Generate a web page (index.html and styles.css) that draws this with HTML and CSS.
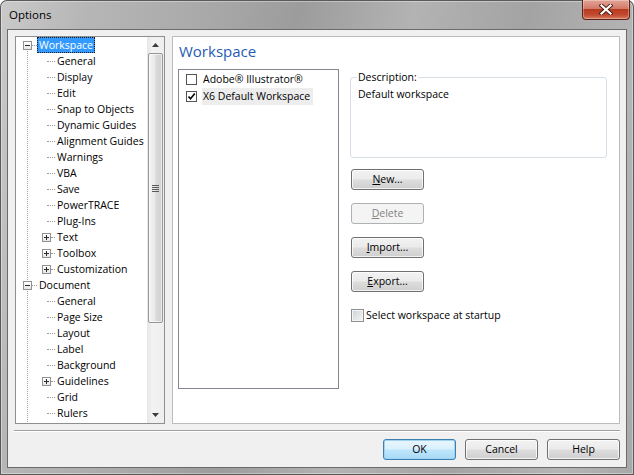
FILE: index.html
```html
<!DOCTYPE html>
<html>
<head>
<meta charset="utf-8">
<title>Options</title>
<link rel="stylesheet" href="styles.css">
</head>
<body>
<div class="window">
  <div class="titlebar">
    <span class="title">Options</span>
    <div class="close">
      <svg width="14" height="11" viewBox="0 0 14 11"><path d="M2.5 1.5 L11.5 9.5 M11.5 1.5 L2.5 9.5" stroke="#4a1a12" stroke-width="4" stroke-linecap="square"/><path d="M2.5 1.5 L11.5 9.5 M11.5 1.5 L2.5 9.5" stroke="#ffffff" stroke-width="2.2" stroke-linecap="square"/></svg>
    </div>
  </div>
  <div class="client">
    <div class="main">
      <div class="treebox">
        <div class="tree">
          <div class="row l0"><span class="exp"><svg width="9" height="9" viewBox="0 0 9 9"><path d="M2 4.5 H7" stroke="#2a2a2a"/></svg></span><span class="hz"></span><span class="label sel">Workspace</span></div>
          <div class="row l1"><span class="hz"></span><span class="label">General</span></div>
          <div class="row l1"><span class="hz"></span><span class="label">Display</span></div>
          <div class="row l1"><span class="hz"></span><span class="label">Edit</span></div>
          <div class="row l1"><span class="hz"></span><span class="label">Snap to Objects</span></div>
          <div class="row l1"><span class="hz"></span><span class="label">Dynamic Guides</span></div>
          <div class="row l1"><span class="hz"></span><span class="label">Alignment Guides</span></div>
          <div class="row l1"><span class="hz"></span><span class="label">Warnings</span></div>
          <div class="row l1"><span class="hz"></span><span class="label">VBA</span></div>
          <div class="row l1"><span class="hz"></span><span class="label">Save</span></div>
          <div class="row l1"><span class="hz"></span><span class="label">PowerTRACE</span></div>
          <div class="row l1"><span class="hz"></span><span class="label">Plug-Ins</span></div>
          <div class="row l1x"><span class="exp"><svg width="9" height="9" viewBox="0 0 9 9"><path d="M2 4.5 H7 M4.5 2 V7" stroke="#2a2a2a"/></svg></span><span class="hz"></span><span class="label">Text</span></div>
          <div class="row l1x"><span class="exp"><svg width="9" height="9" viewBox="0 0 9 9"><path d="M2 4.5 H7 M4.5 2 V7" stroke="#2a2a2a"/></svg></span><span class="hz"></span><span class="label">Toolbox</span></div>
          <div class="row l1x"><span class="exp"><svg width="9" height="9" viewBox="0 0 9 9"><path d="M2 4.5 H7 M4.5 2 V7" stroke="#2a2a2a"/></svg></span><span class="hz"></span><span class="label">Customization</span></div>
          <div class="row l0"><span class="exp"><svg width="9" height="9" viewBox="0 0 9 9"><path d="M2 4.5 H7" stroke="#2a2a2a"/></svg></span><span class="hz"></span><span class="label">Document</span></div>
          <div class="row l1"><span class="hz"></span><span class="label">General</span></div>
          <div class="row l1"><span class="hz"></span><span class="label">Page Size</span></div>
          <div class="row l1"><span class="hz"></span><span class="label">Layout</span></div>
          <div class="row l1"><span class="hz"></span><span class="label">Label</span></div>
          <div class="row l1"><span class="hz"></span><span class="label">Background</span></div>
          <div class="row l1x"><span class="exp"><svg width="9" height="9" viewBox="0 0 9 9"><path d="M2 4.5 H7 M4.5 2 V7" stroke="#2a2a2a"/></svg></span><span class="hz"></span><span class="label">Guidelines</span></div>
          <div class="row l1"><span class="hz"></span><span class="label">Grid</span></div>
          <div class="row l1"><span class="hz"></span><span class="label">Rulers</span></div>
        </div>
        <div class="vscroll">
          <div class="sb-btn"><svg width="7" height="4" viewBox="0 0 7 4"><polygon points="0,4 3.5,0 7,4" fill="#3c3c3c"/></svg></div>
          <div class="track">
            <div class="thumb">
              <svg width="7" height="7" viewBox="0 0 7 7"><path d="M0 0.5 H7 M0 2.5 H7 M0 4.5 H7 M0 6.5 H7" stroke="#5a5a5a"/></svg>
            </div>
          </div>
          <div class="sb-btn"><svg width="7" height="4" viewBox="0 0 7 4"><polygon points="0,0 7,0 3.5,4" fill="#3c3c3c"/></svg></div>
        </div>
      </div>
      <div class="page">
        <h1>Workspace</h1>
        <div class="content">
          <div class="list">
            <div class="item"><span class="cb"></span><span class="txt">Adobe® Illustrator®</span></div>
            <div class="item"><span class="cb"><svg width="9" height="9" viewBox="0 0 9 9"><path d="M1.5 4.5 L3.5 6.8 L7.8 1.6" stroke="#000" stroke-width="1.6" fill="none"/></svg></span><span class="txt selected">X6 Default Workspace</span></div>
          </div>
          <div class="side">
            <fieldset class="desc">
              <legend>Description:</legend>
              <div class="desc-text">Default workspace</div>
            </fieldset>
            <div class="btns">
              <div class="btn"><u>N</u>ew...</div>
              <div class="btn disabled"><u>D</u>elete</div>
              <div class="btn"><u>I</u>mport...</div>
              <div class="btn"><u>E</u>xport...</div>
            </div>
            <div class="check"><span class="box"></span><span>Select workspace at startup</span></div>
          </div>
        </div>
      </div>
    </div>
    <div class="sep"></div>
    <div class="footer">
      <div class="btn default">OK</div>
      <div class="btn">Cancel</div>
      <div class="btn">Help</div>
    </div>
  </div>
</div>
</body>
</html>
```
FILE: styles.css
```css
* { box-sizing: border-box; }
html, body { margin: 0; padding: 0; }
body {
  width: 634px;
  height: 475px;
  overflow: hidden;
  background: #ffffff;
  font-family: "Open Sans", "Noto Sans", sans-serif;
  font-size: 10.5px;
  color: #000;
}
.window {
  width: 634px;
  height: 475px;
  display: flex;
  flex-direction: column;
  padding: 0 7px 7px 7px;
  border-radius: 7px 7px 0 0;
  background: linear-gradient(100deg, #cacaca 0%, #b6b6b6 12%, #aaaaaa 28%, #9c9c9c 42%, #b3b3b3 58%, #a3a3a3 74%, #b5b5b5 90%, #a8a8a8 100%);
  box-shadow: inset 0 0 0 1px #5a5a5a, inset 0 0 0 2px rgba(255,255,255,0.35);
}
.titlebar {
  height: 29px;
  flex: none;
  display: flex;
  justify-content: space-between;
  align-items: flex-start;
}
.title {
  margin: 7px 0 0 2px;
  font-size: 11.5px;
  line-height: 16px;
  color: #000;
}
.close {
  width: 48px;
  height: 20px;
  margin-right: -3px;
  border: 1px solid #5e2218;
  border-top: none;
  border-radius: 0 0 4px 4px;
  background: linear-gradient(#e3a597 0%, #d27a68 45%, #b73a20 50%, #c24a30 78%, #d67c5e 100%);
  box-shadow: inset 0 0 0 1px rgba(255,255,255,0.3);
  display: flex;
  align-items: center;
  justify-content: center;
}
.client {
  flex: 1;
  background: #f0f0f0;
  border: 1px solid #6b6b6b;
  padding: 6px 6px 7px 7px;
  display: flex;
  flex-direction: column;
}
.main {
  height: 388px;
  display: flex;
  gap: 7px;
  flex: none;
}
.treebox {
  width: 150px;
  border: 1px solid #8e8f8f;
  background: #fff;
  display: flex;
  overflow: hidden;
}
.tree {
  flex: 1;
  overflow: hidden;
  background-image: repeating-linear-gradient(to bottom, #a0a0a0 0, #a0a0a0 1px, transparent 1px, transparent 2px);
  background-size: 1px 400px;
  background-position: 11px 14px;
  background-repeat: no-repeat;
}
.row {
  height: 16px;
  display: flex;
  align-items: center;
  white-space: nowrap;
}
.l0 { padding-left: 7px; }
.l1 { padding-left: 31px; }
.l1x { padding-left: 26px; }
.exp {
  width: 9px;
  height: 9px;
  flex: none;
  border: 1px solid #919191;
  background: linear-gradient(#ffffff, #e6e6e6);
  display: flex;
  position: relative;
}
.exp svg { position: absolute; left: -1px; top: -1px; }
.hz {
  flex: none;
  height: 0;
  border-top: 1px dotted #9a9a9a;
}
.l0 .hz { width: 5px; }
.l1 .hz { width: 8px; }
.l1x .hz { width: 4px; }
.label {
  padding: 0 2px;
  height: 16px;
  line-height: 16px;
}
.label.sel {
  background: #3399ff;
  color: #fff;
  outline: 1px dotted #1a1a1a;
  outline-offset: -1px;
}
.vscroll {
  width: 17px;
  flex: none;
  display: flex;
  flex-direction: column;
  background: linear-gradient(90deg, #e6e6e6 0%, #f2f2f2 30%, #efefef 100%);
}
.sb-btn {
  height: 16px;
  flex: none;
  display: flex;
  align-items: center;
  justify-content: center;
}
.track {
  flex: 1;
  padding: 0 1px 0 1px;
}
.thumb {
  height: 270px;
  border: 1px solid #979797;
  border-radius: 2px;
  background: linear-gradient(90deg, #f4f4f4 0%, #e8e8e8 45%, #d9d9d9 55%, #d0d0d0 100%);
  box-shadow: inset 0 0 0 1px rgba(255,255,255,0.6);
  display: flex;
  align-items: center;
  justify-content: center;
}
.page {
  flex: 1;
  border: 1px solid #bcbcbc;
  background: #fff;
  padding: 4px 0 0 5px;
}
h1 {
  margin: 0;
  padding-left: 1px;
  font-size: 15px;
  font-weight: normal;
  line-height: 20px;
  color: #1f5bb5;
}
.content {
  margin-top: 8px;
  display: flex;
}
.list {
  width: 161px;
  height: 320px;
  border: 1px solid #828790;
  padding-top: 1px;
}
.item {
  height: 17px;
  display: flex;
  align-items: center;
}
.cb {
  width: 11px;
  height: 11px;
  flex: none;
  margin: 0 5px 0 7px;
  border: 1px solid #555;
  background: #fff;
  display: flex;
  align-items: center;
  justify-content: center;
}
.txt {
  padding: 0 3px 0 1px;
  line-height: 17px;
  height: 17px;
  white-space: nowrap;
}
.txt.selected { background: #ededed; }
.side {
  width: 257px;
  margin-left: 11px;
  display: flex;
  flex-direction: column;
  align-items: flex-start;
}
.desc {
  width: 257px;
  height: 88px;
  margin: 1px 0 0 0;
  padding: 0 6px;
  border: 1px solid #d5dfe5;
  border-radius: 3px;
}
.desc legend {
  padding: 0 1px;
  line-height: 14px;
}
.desc-text {
  margin-top: 3px;
  padding-left: 1px;
  line-height: 14px;
}
.btns {
  margin: 11px 0 0 1px;
  display: flex;
  flex-direction: column;
  gap: 13px;
}
.btn {
  width: 73px;
  height: 21px;
  border: 1px solid #707070;
  border-radius: 3px;
  background: linear-gradient(#f2f2f2 0%, #ebebeb 48%, #dddddd 52%, #cfcfcf 100%);
  box-shadow: inset 0 0 0 1px rgba(255,255,255,0.75);
  text-align: center;
  line-height: 19px;
  color: #000;
}
.btn.disabled {
  border-color: #adb2b5;
  background: #f4f4f4;
  box-shadow: none;
  color: #838383;
}
.btn.default {
  border-color: #3c7fb1;
  background: linear-gradient(#eaf6fd 0%, #d9f0fc 48%, #bee6fd 52%, #a7d9f5 100%);
  box-shadow: inset 0 0 0 1px #9fd3f2;
}
.check {
  margin: 16px 0 0 1px;
  display: flex;
  align-items: center;
  gap: 2px;
  line-height: 14px;
}
.check .box {
  width: 13px;
  height: 13px;
  border: 1px solid #8e8f8f;
  background: linear-gradient(135deg, #cfd2d6 0%, #e6e7e8 60%, #f6f6f6 100%);
  box-shadow: inset 0 0 0 1px #f4f4f4;
}
.sep {
  flex: none;
  height: 2px;
  margin: 6px 0 0 -1px;
  border-top: 1px solid #a0a0a0;
  border-bottom: 1px solid #ffffff;
}
.footer {
  margin-top: 7px;
  display: flex;
  justify-content: flex-end;
  gap: 9px;
}
```
